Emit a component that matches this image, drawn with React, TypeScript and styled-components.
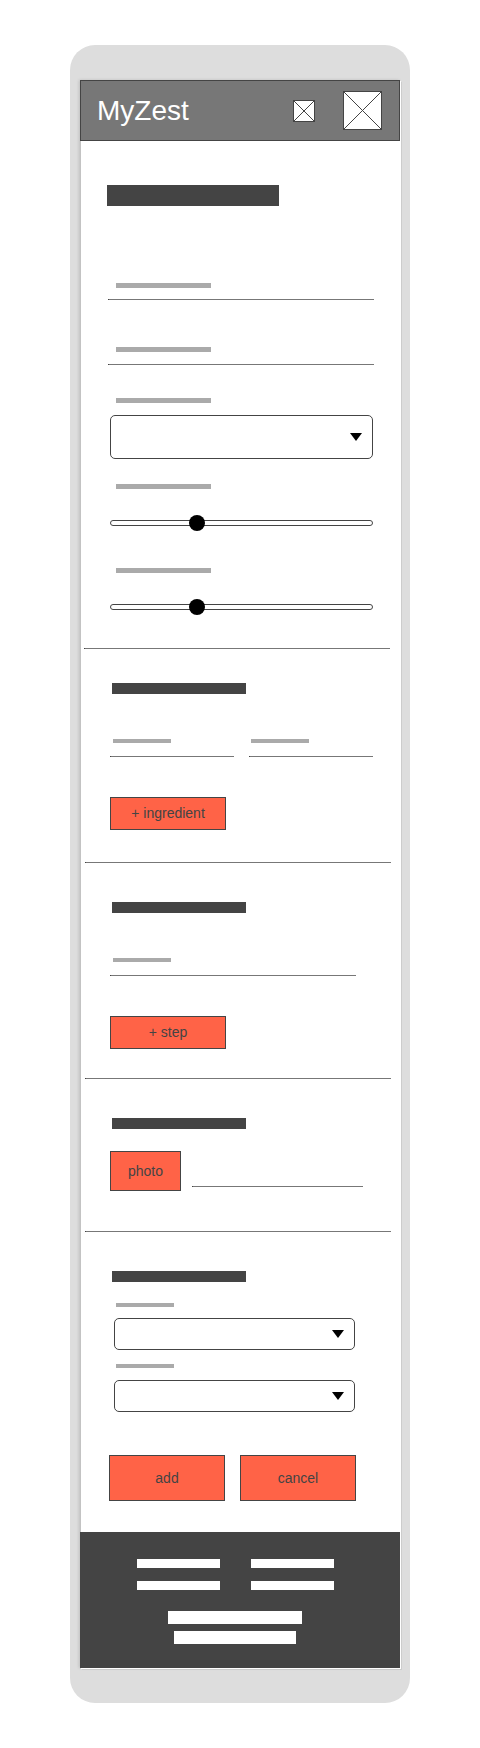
import React from 'react';
import styled, { createGlobalStyle } from 'styled-components';

const GlobalStyle = createGlobalStyle`
  * { box-sizing: border-box; }
  body { margin: 0; background: #fff; font-family: 'Liberation Sans', Arial, sans-serif; }
`;

const Page = styled.main`
  width: 480px;
  height: 1748px;
  padding: 45px 70px;
`;

const Device = styled.div`
  width: 340px;
  height: 1658px;
  padding: 36px 9px 34px 11px;
  border-radius: 25px;
  background: #ddd;
`;

const Screen = styled.div`
  display: flex;
  flex-direction: column;
  width: 320px;
  height: 1588px;
  background: #fff;
  box-shadow: 1px 1px 0 #ccc, -2px -1px 3px rgba(0, 0, 0, 0.14);
`;

const Header = styled.header`
  display: flex;
  align-items: center;
  width: 320px;
  height: 61px;
  margin: -1px 0 0 -1px;
  padding: 0 17px 0 16px;
  border: 1px solid #444;
  background: #777;
`;

const Brand = styled.h1`
  flex: 1;
  margin: 0;
  font-size: 28px;
  font-weight: 400;
  line-height: 32px;
  color: #fff;
`;

const HeaderIcons = styled.div`
  display: flex;
  align-items: center;
  gap: 28px;
`;

const IconBox = styled.svg`
  display: block;
  border: 1px solid #444;
  background: #fff;
`;

const Section = styled.section<{ $height: number; $top: number }>`
  display: flex;
  flex-direction: column;
  height: ${(p) => p.$height}px;
  padding-top: ${(p) => p.$top}px;
  padding-left: 28px;
`;

const Divider = styled.hr<{ $left?: number }>`
  flex: none;
  width: 306px;
  height: 1px;
  margin: 0 0 0 ${(p) => p.$left ?? 4}px;
  border: 0;
  border-left: 1px solid #444;
  background: #777;
`;

const Title = styled.div`
  width: 172px;
  height: 21px;
  margin: 0 0 77px -2px;
  background: #444;
`;

const Heading = styled.div<{ $gap: number }>`
  width: 134px;
  height: 11px;
  margin: 0 0 ${(p) => p.$gap}px 3px;
  background: #444;
`;

const Label = styled.div<{ $small?: boolean; $left?: number; $gap: number }>`
  width: ${(p) => (p.$small ? 58 : 95)}px;
  height: ${(p) => (p.$small ? 4 : 5)}px;
  margin: 0 0 ${(p) => p.$gap}px ${(p) => p.$left ?? 7}px;
  background: #aaa;
`;

const Line = styled.div<{ $width: number; $left?: number; $gap?: number }>`
  flex: none;
  width: ${(p) => p.$width}px;
  height: 1px;
  margin: 0 0 ${(p) => p.$gap ?? 0}px ${(p) => p.$left ?? 1}px;
  border-left: 1px solid #444;
  background: #777;
`;

const SelectBox = styled.div<{ $compact?: boolean; $gap: number }>`
  display: flex;
  align-items: center;
  justify-content: flex-end;
  width: ${(p) => (p.$compact ? 241 : 263)}px;
  height: ${(p) => (p.$compact ? 32 : 44)}px;
  margin: 0 0 ${(p) => p.$gap}px ${(p) => (p.$compact ? 5 : 1)}px;
  padding-right: 10px;
  border: 1px solid #444;
  border-radius: 5px;
`;

const Caret = styled.span`
  border-top: 8px solid #000;
  border-left: 6px solid transparent;
  border-right: 6px solid transparent;
`;

const Track = styled.div<{ $gap?: number }>`
  display: flex;
  align-items: center;
  width: 263px;
  height: 6px;
  margin: 0 0 ${(p) => p.$gap ?? 0}px 1px;
  padding-left: 78px;
  border: 1px solid #444;
  border-radius: 3px;
`;

const Thumb = styled.span`
  flex: none;
  width: 16px;
  height: 16px;
  border-radius: 50%;
  background: #000;
`;

const Columns = styled.div<{ $gap: number }>`
  display: flex;
  gap: ${(p) => p.$gap}px;
`;

const Button = styled.button<{ $width?: number; $height: number }>`
  flex: none;
  width: ${(p) => p.$width ?? 116}px;
  height: ${(p) => p.$height}px;
  margin: 0 0 0 1px;
  padding: 0 0 ${(p) => p.$height % 2}px;
  border: 1px solid #444;
  border-radius: 0;
  background: #ff6347;
  font: 14px/16px 'Liberation Sans', Arial, sans-serif;
  color: #444;
`;

const PhotoRow = styled.div`
  display: flex;
  align-items: flex-end;
  gap: 10px;
`;

const Actions = styled.div`
  display: flex;
  gap: 14px;
  margin-left: -1px;
`;

const Footer = styled.footer`
  display: flex;
  flex-direction: column;
  width: 320px;
  height: 136px;
  margin-left: -1px;
  padding: 27px 0 0 57px;
  background: #444;
`;

const LinkGrid = styled.div`
  display: grid;
  grid-template-columns: 83px 83px;
  gap: 13px 31px;
  margin-bottom: 21px;
`;

const FooterLink = styled.span`
  height: 9px;
  background: #fff;
`;

const FooterLine = styled.div<{ $width: number; $left: number }>`
  width: ${(p) => p.$width}px;
  height: 13px;
  margin: 0 0 7px ${(p) => p.$left}px;
  background: #fff;
`;

function Placeholder({ size }: { size: number }) {
  const inner = size - 2;
  return (
    <IconBox width={size} height={size} viewBox={`0 0 ${inner} ${inner}`}>
      <path
        d={`M0 0L${inner} ${inner}M${inner} 0L0 ${inner}`}
        stroke="#444"
        shapeRendering="crispEdges"
      />
    </IconBox>
  );
}

function Select({ compact, gap }: { compact?: boolean; gap: number }) {
  return (
    <SelectBox $compact={compact} $gap={gap}>
      <Caret />
    </SelectBox>
  );
}

function Slider({ gap }: { gap?: number }) {
  return (
    <Track $gap={gap}>
      <Thumb />
    </Track>
  );
}

export default function App() {
  return (
    <Page>
      <GlobalStyle />
      <Device>
        <Screen>
          <Header>
            <Brand>MyZest</Brand>
            <HeaderIcons>
              <Placeholder size={22} />
              <Placeholder size={39} />
            </HeaderIcons>
          </Header>

          <Section $height={507} $top={44}>
            <Title />
            <Label $gap={11} />
            <Line $width={266} $left={-1} $gap={47} />
            <Label $gap={12} />
            <Line $width={266} $left={-1} $gap={33} />
            <Label $gap={12} />
            <Select gap={25} />
            <Label $gap={31} />
            <Slider gap={42} />
            <Label $gap={31} />
            <Slider />
          </Section>
          <Divider $left={3} />

          <Section $height={213} $top={34}>
            <Heading $gap={45} />
            <Columns $gap={15}>
              <div>
                <Label $small $left={4} $gap={13} />
                <Line $width={124} $gap={40} />
              </div>
              <div>
                <Label $small $left={2} $gap={13} />
                <Line $width={124} $left={0} $gap={40} />
              </div>
            </Columns>
            <Button $height={33}>+ ingredient</Button>
          </Section>
          <Divider />

          <Section $height={215} $top={39}>
            <Heading $gap={45} />
            <Label $small $left={4} $gap={13} />
            <Line $width={246} $gap={40} />
            <Button $height={33}>+ step</Button>
          </Section>
          <Divider />

          <Section $height={152} $top={39}>
            <Heading $gap={22} />
            <PhotoRow>
              <Button $width={71} $height={40}>photo</Button>
              <Line $width={171} $gap={4} />
            </PhotoRow>
          </Section>
          <Divider />

          <Section $height={300} $top={39}>
            <Heading $gap={21} />
            <Label $small $gap={11} />
            <Select compact gap={14} />
            <Label $small $gap={12} />
            <Select compact gap={43} />
            <Actions>
              <Button $height={46}>add</Button>
              <Button $height={46}>cancel</Button>
            </Actions>
          </Section>

          <Footer>
            <LinkGrid>
              <FooterLink />
              <FooterLink />
              <FooterLink />
              <FooterLink />
            </LinkGrid>
            <FooterLine $width={134} $left={31} />
            <FooterLine $width={122} $left={37} />
          </Footer>
        </Screen>
      </Device>
    </Page>
  );
}
